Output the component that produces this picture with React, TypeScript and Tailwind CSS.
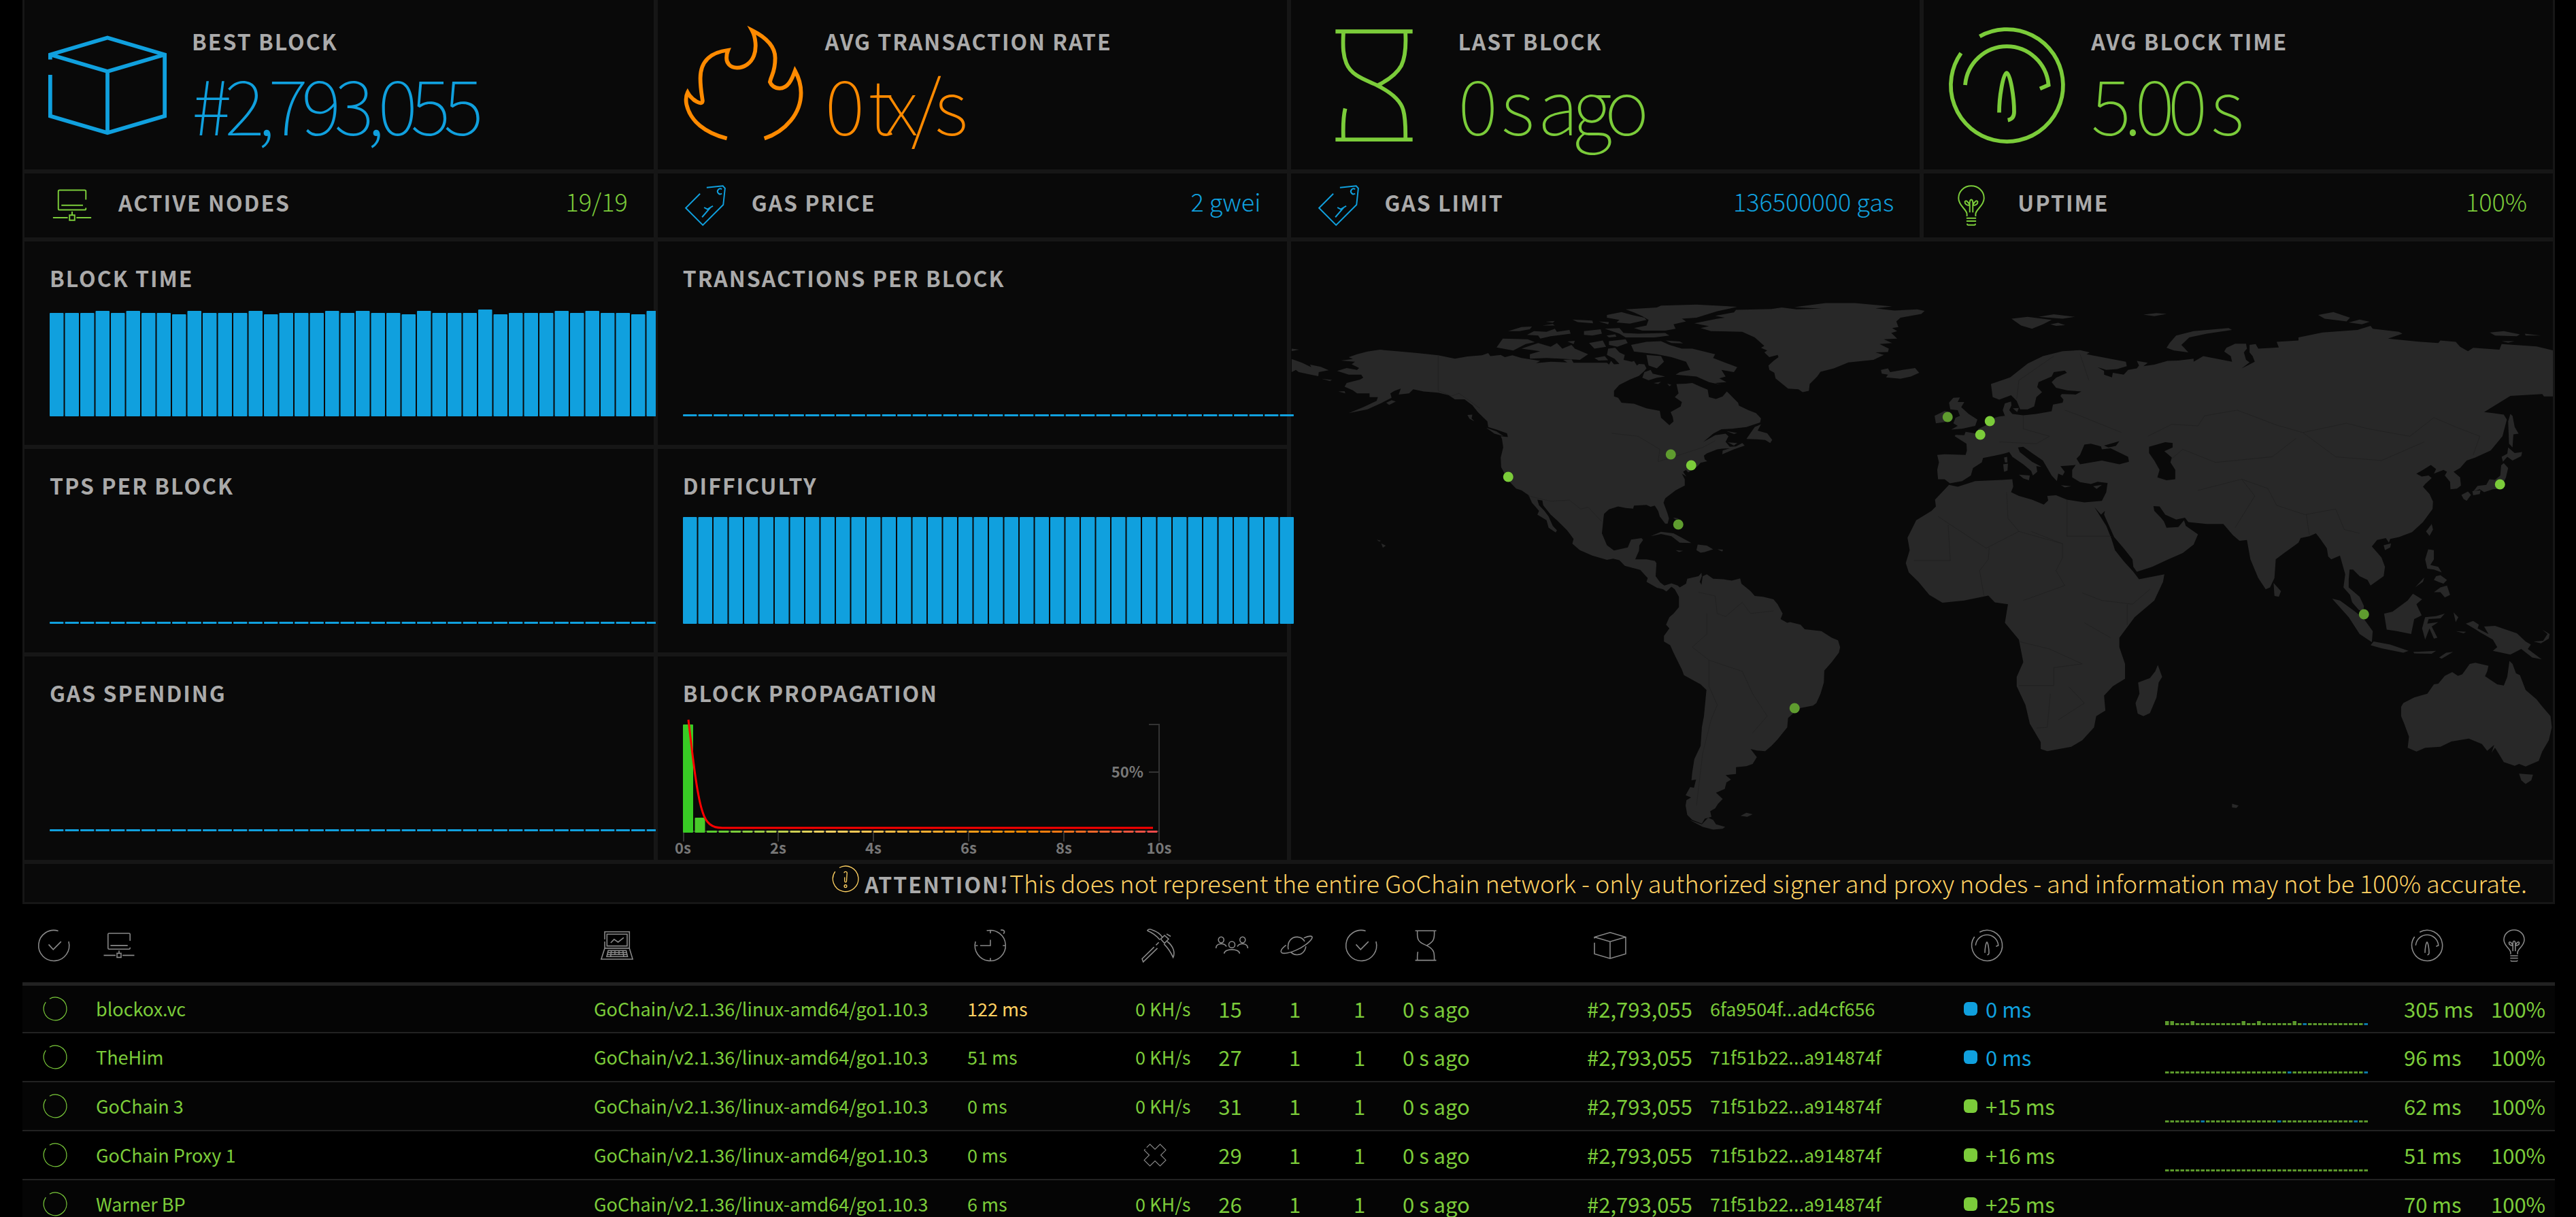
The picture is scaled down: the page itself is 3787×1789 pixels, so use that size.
import type { ReactNode } from "react";
import { clsx } from "clsx";

// ── Icons ────────────────────────────────────────────────

const GAP_RING = "M8.8 2.8A15 15 0 1 1 3.8 7.3";

const icons = {
  block:
    "M.7 9V7.7L16 3.2L31.3 7.7V24.1L16 28.6L.7 24.1V13.1M.7 7.7L16 12.2L31.3 7.7M16 12.2V28.6",
  flame:
    "M22.3 30.1C28 28.2 32.1 23.4 32.1 17.9C32.1 15.5 31.5 13.8 30.5 12C29.6 14.5 28.6 16.7 26.4 16.7C25 16.7 24.1 15.8 23.8 15C24.2 13 25.2 12.5 25.2 8.6C25.2 5.5 23 3.2 19 1.2C20 3 20.3 6 19.5 8C18.7 10 17 11.2 15 11.2C13 11.2 12.2 9.8 12.2 8.6C12.2 7.6 12.3 7.2 12.6 6.5C8.5 7 5.2 9 5.2 14C5.2 16.5 5.5 18 5.8 20C5.8 21.5 3 20 1.8 17.8C1.2 19 1.3 20 1.5 21C2.5 25.5 6.5 28.6 12.3 30.1",
  hourglass:
    "M5.7 1.5H26.3M5.7 30.4H26.3M7.8 2C7.6 6 7.8 8 8.6 10C10 13.5 14 14.5 16.8 15.9C20 17.5 23 19.5 23.8 22.5C24.5 25 24.4 28 24.4 30M24.4 2C24.6 6 24.3 8.5 23.3 10.6C22 13 19.5 14.6 17.2 15.8M8.3 22.1C7.7 24.5 7.7 27 7.8 30",
  gauge: `${GAP_RING}M4.9 15.8A11.2 11.4 0 0 1 27.2 15.8L24.9 16.8M14 23.2C14 19 15 13 16 12.6C17 13 18 19 18 23C18 24.3 17.3 25 16.3 25.2`,
  network:
    "M26.8 11.4V5A1 1 0 0 0 25.8 4H6.2A1 1 0 0 0 5.2 5V18.5A1 1 0 0 0 6.2 19.5H25.8A1 1 0 0 0 26.8 18.5V17.8M7.6 15.9H24.5M16 20.8V23.6M14 23.6H18V27.6H14ZM1 25.6H12.6M19.4 25.6H31",
  tag: "M17 2L29.7 .7L31.4 2.6L30 15.5L14 31.4L.6 18L11.8 6.8M28.9 3.3A2.1 2.1 0 1 0 28.9 6.7M15 17.6L17.6 19L21.9 16.4M13.4 25.2L19.8 17.8",
  bulb: "M12.6 24.5V22.8C12.6 19 6 16.5 6 10.3C6 4.8 10.5 .7 16 .7S26 4.8 26 10.3C26 16.5 19.4 19 19.4 22.8V24.5M12.2 26H19.8M12.2 28.3H19.8M12.8 30.3C12.8 31 13 31.3 13.5 31.3H18.5C19 31.3 19.2 31 19.2 30.3M14.8 21.5V16C12 16 10.8 14.5 11 13C11.5 11.8 13.5 12.5 14.8 16M17.2 21.5V16C20 16 21.2 14.5 21 13C20.5 11.8 18.5 12.5 17.2 16M14.8 16C14.5 13.5 15 11.5 16 11.5S17.5 13.5 17.2 16",
  check: "M20.4 1.6A15 15 0 1 0 30.6 12M11 14.9L15.5 19.9L23.2 12.1",
  laptop:
    "M4 10V2.5H28.2V18.6H4V12M6.2 4.8H26V16.4H6.2ZM9.9 13.3L13.2 9.9L17.1 12.6L22.6 8.2M4 18.6L.6 29.3H31.4L28.2 18.6M7.4 20.8H25L26.4 26.8H6ZM7 22.8H25.6M6.5 24.8H26M10.5 20.8L9.8 26.8M14 20.8V24.8M18 20.8V24.8M21.8 20.8L22.6 26.8",
  clock:
    "M12.4 1.4A15 15 0 1 1 1.4 12M26 .8C29 .4 31 2 28.8 4.4M16 10.3V16H6M1.6 16H3.6M28.2 16H30.2M16 1.4V4M16 28.2V30.6",
  pickaxe:
    "M11.8 17.4L0 29L1.1 32L15 18.6M16.4 12.8L13.6 15.6M5 1.4C6 0 8 -.2 9.8 .6C14 2 18 4.5 19.8 7.8M5 1.4C9 3 13 5 17.4 10.4M22 6L26 9.6L22 13.7L18.2 9.6ZM24 4.6L28 7M21.4 14.4C25 18 28 22 30.4 27.6C33 22 29.5 15.5 24.6 12",
  peers:
    "M5.5 7.5A2.7 2.9 0 1 0 5.5 13.3A2.7 2.9 0 1 0 5.5 7.5M26.5 7.5A2.7 2.9 0 1 0 26.5 13.3A2.7 2.9 0 1 0 26.5 7.5M16 12A3 3.1 0 1 0 16 18.2A3 3.1 0 1 0 16 12M.4 18.6C.4 13.4 9 13 10.6 17M31.6 18.6C31.6 13.4 23 13 21.4 17M8.4 23.8C8.8 18.6 23.2 18.6 23.6 23.8",
  planet:
    "M8 19.8C6.4 12 11.4 7.2 17 7.6C20 7.8 22.6 9.4 24 12M25.2 16.8C24.6 22 20.6 25.4 16 25C13.6 24.8 12 24 10.6 22.6M23.2 8.6C28 6.2 32.4 6 31.2 8.8C29.4 12.6 22 17.8 15.4 20.6C8 23.6 .6 25 .8 21.6C1 20 3 17.6 5.8 15.6",
  cross:
    "M4.4 5.6L9 1L16 8L23 1L31 9L24 16L31 23L23 31L16 24L9 31L1 23L8 16L1.2 9.4L2.4 7.6",
  ring: GAP_RING,
  alert: `${GAP_RING}M14.4 9C14.4 7 17.8 7 17.8 9L17.2 18.6C17 20.4 15.2 20.4 15 18.6V14M16 23A1.5 1.5 0 1 0 16 26A1.5 1.5 0 1 0 16 23`,
};

type IconName = keyof typeof icons;

function Icon({ name, className }: { name: IconName; className?: string }) {
  return (
    <svg
      viewBox="0 0 32 32"
      fill="none"
      stroke="currentColor"
      strokeWidth={1.05}
      className={clsx("shrink-0 overflow-visible", className)}
      aria-hidden="true"
    >
      <path d={icons[name]} />
    </svg>
  );
}

// ── Shared pieces ────────────────────────────────────────

const BLUE = "#10a0de";

function Title({ children, className }: { children: ReactNode; className?: string }) {
  return (
    <h2
      className={clsx(
        "text-[32px] leading-10 font-bold tracking-[2px] text-[#aaa] uppercase whitespace-nowrap",
        className
      )}
    >
      {children}
    </h2>
  );
}

function BigStat({
  icon,
  title,
  value,
  color,
}: {
  icon: IconName;
  title: string;
  value: string;
  color: string;
}) {
  return (
    <section
      className={clsx(
        "flex h-[252px] items-start gap-9 border-x-3 border-b-3 border-[#161616] bg-[#090909] pt-[38px] pl-[34px]",
        color
      )}
    >
      <Icon name={icon} className="size-44" />
      <div className="pt-0.5">
        <Title>{title}</Title>
        <p className="mt-3.5 text-[112px] leading-[112px] font-thin tracking-[-10px] whitespace-nowrap">
          {value}
        </p>
      </div>
    </section>
  );
}

function SmallStat({
  icon,
  title,
  value,
  iconColor,
  color,
}: {
  icon: IconName;
  title: string;
  value: string;
  iconColor: string;
  color: string;
}) {
  return (
    <section className="flex h-[100px] items-start border-3 border-[#161616] bg-[#090909] pt-[17px] pr-[38px] pl-10">
      <Icon name={icon} className={clsx("size-15", iconColor)} />
      <Title className="mt-[5px] ml-[38px]">{title}</Title>
      <p className={clsx("mt-[3px] ml-auto text-[36px] leading-10 font-light", color)}>{value}</p>
    </section>
  );
}

function ChartCard({
  title,
  children,
  className,
}: {
  title: string;
  children: ReactNode;
  className?: string;
}) {
  return (
    <section
      className={clsx(
        "flex h-[305px] flex-col border-3 border-[#161616] bg-[#090909] pt-[33px] pl-[37px]",
        className
      )}
    >
      <Title>{title}</Title>
      {children}
    </section>
  );
}

const flat = Array.from({ length: 40 }, () => 3);
const full = Array.from({ length: 40 }, () => 157);
const blockTimes = [
  152, 152, 152, 155, 152, 155, 152, 152, 150, 155, 152, 152, 152, 155, 150, 152, 152, 152, 155,
  152, 155, 152, 152, 150, 155, 152, 152, 152, 157, 150, 152, 152, 152, 155, 152, 155, 152, 152,
  150, 155,
];

function BarChart({ values }: { values: number[] }) {
  return (
    <svg width={900} height={184} className="max-w-none shrink-0" role="img" aria-label="History">
      {values.map((v, i) => (
        <rect key={i} x={i * 22.5} y={184 - v} width={20.5} height={v} rx={1} fill={BLUE} />
      ))}
    </svg>
  );
}

// Delay colours run from green through yellow and orange to red
const stops: [number, number[]][] = [
  [0, [56, 203, 36]],
  [4, [123, 204, 58]],
  [12, [255, 209, 98]],
  [28, [255, 138, 0]],
  [39, [247, 75, 75]],
];

function delayColor(i: number) {
  const n = stops.findIndex(([at]) => at >= i);
  if (n <= 0) return `rgb(${stops[0][1].join(",")})`;
  const [a, from] = stops[n - 1];
  const [b, to] = stops[n];
  const t = (i - a) / (b - a);
  return `rgb(${from.map((c, k) => Math.round(c + (to[k] - c) * t)).join(",")})`;
}

function PropagationChart() {
  return (
    <svg
      width={740}
      height={206}
      className="max-w-none shrink-0 overflow-visible text-[22px] font-bold"
      role="img"
      aria-label="Block propagation"
    >
      <g stroke="#333" strokeWidth={2} fill="none">
        <path d="M685 27H700V184H685M685 97H700" />
        <path d="M1 184H700" />
        <path d="M1 184V199M140 184V199M280 184V199M420 184V199M560 184V199M700 184V199" />
      </g>
      {Array.from({ length: 40 }, (_, i) => {
        const h = i === 0 ? 159 : i === 1 ? 22 : 3;
        return (
          <rect
            key={i}
            x={i * 17.5}
            y={186 - h}
            width={15}
            height={h}
            rx={1}
            fill={delayColor(i)}
          />
        );
      })}
      <path
        d="M8 20C14 70 20 130 29 156C34 172 42 179 58 179H691"
        fill="none"
        stroke="red"
        strokeWidth={3}
      />
      <g fill="#777" textAnchor="middle">
        {["0s", "2s", "4s", "6s", "8s", "10s"].map((label, i) => (
          <text key={label} x={i * 140} y={217}>
            {label}
          </text>
        ))}
        <text x={677} y={105} textAnchor="end">
          50%
        </text>
      </g>
    </svg>
  );
}

// ── World map ────────────────────────────────────────────

const americas = [
  // mainland
  "146,237 175,233 165,228 185,220 210,213 240,208 280,212 330,217 380,223 420,232 450,226 485,223 500,217 505,225 530,222 540,228 558,223 580,230 625,238 615,244 650,240 690,242 680,235 700,234 705,243 740,243 785,243 790,248 795,238 802,247 815,246 803,232 785,222 788,205 805,203 815,215 828,222 825,235 845,240 850,238 857,250 862,246 875,247 880,258 875,265 862,278 840,288 815,302 802,318 802,333 812,337 820,350 850,353 880,365 912,372 915,390 935,410 945,400 943,388 938,375 962,360 965,348 948,335 957,325 952,300 975,299 990,297 1010,307 1027,315 1030,335 1047,340 1063,333 1073,320 1100,350 1102,358 1125,370 1143,378 1155,392 1153,403 1120,415 1085,420 1060,421 1040,433 1017,455 1045,437 1070,433 1077,440 1070,455 1080,468 1095,467 1110,458 1116,465 1090,475 1062,488 1063,478 1080,472 1062,473 1050,475 1025,486 1018,492 1020,502 1026,507 1010,511 1003,520 980,537 975,530 968,535 976,548 965,540 972,555 972,572 950,585 925,606 921,618 930,645 934,660 931,674 925,674 912,655 908,640 900,626 890,629 880,624 850,626 848,634 830,632 812,628 790,636 778,648 776,668 773,700 785,732 802,746 835,738 843,717 868,713 872,718 863,732 862,747 853,770 880,770 900,774 904,780 902,815 913,832 923,840 940,834 955,840 960,845 975,835 978,822 1005,815 1012,806 1013,815 1008,830 1012,838 1015,815 1025,810 1040,822 1065,823 1085,827 1105,821 1108,835 1130,855 1140,868 1160,870 1185,877 1195,890 1207,915 1202,930 1218,940 1225,938 1250,945 1260,957 1300,962 1325,980 1340,987 1345,1005 1342,1020 1325,1045 1307,1068 1306,1100 1298,1130 1288,1155 1280,1162 1250,1168 1235,1180 1220,1195 1218,1220 1195,1252 1180,1270 1165,1284 1145,1282 1130,1278 1145,1300 1135,1318 1120,1324 1095,1327 1095,1345 1070,1348 1083,1360 1072,1368 1068,1385 1047,1395 1063,1412 1052,1425 1045,1437 1033,1445 1036,1460 1020,1465 1013,1478 990,1468 978,1455 974,1430 976,1415 987,1408 974,1402 985,1380 994,1382 999,1360 988,1362 990,1340 995,1305 1010,1270 1013,1220 1018,1190 1024,1120 1010,1105 970,1080 965,1065 945,1020 937,1000 922,990 922,975 935,955 927,945 935,925 945,915 958,898 958,870 948,850 940,843 928,856 920,850 905,846 880,830 883,820 865,798 828,787 815,772 800,768 785,771 750,760 720,745 702,728 705,715 690,693 665,665 650,650 632,625 630,612 618,610 622,625 635,640 645,655 655,680 665,692 662,698 645,685 640,665 618,650 622,640 605,618 597,598 580,585 567,580 548,558 537,535 531,523 530,497 536,470 533,447 530,440 548,442 549,450 545,432 520,422 500,415 498,400 475,375 462,357 443,341 420,341 405,330 380,323 345,320 320,314 310,325 285,328 290,312 275,318 265,325 268,337 245,350 210,368 165,378 200,362 232,345 235,335 215,335 215,325 185,325 175,317 155,307 160,297 192,288 200,283 195,275 165,275 137,265 160,257 185,262 190,257 172,247 180,240",
  // Chukotka, wrapped over the date line
  "28,233 53,243 75,255 72,248 98,254 117,263 93,268 92,279 70,274 45,268 38,262 28,268",
  "28,205 46,208 28,212",
  "100,286 125,289 120,292",
  "140,320 155,319 157,325",
  "255,350 268,343 278,347 262,356",
  // Greenland and Iceland
  "995,137 1050,125 1068,122 1045,117 1090,108 1095,101 1180,99 1205,95 1240,100 1300,98 1235,94 1310,83 1380,83 1470,92 1430,97 1475,103 1530,100 1548,104 1540,112 1490,122 1480,132 1485,147 1470,150 1482,158 1468,163 1482,178 1450,180 1470,190 1440,193 1462,205 1460,214 1430,215 1450,222 1425,235 1365,242 1330,258 1298,267 1290,280 1272,300 1270,318 1255,322 1245,314 1220,312 1190,285 1187,270 1175,262 1173,250 1185,238 1197,228 1195,222 1175,228 1163,215 1170,210 1155,203 1163,198 1140,175 1110,160 1035,158 1010,150 1030,145",
  "1443,262 1460,258 1465,268 1495,262 1525,257 1535,270 1515,280 1490,286 1455,282 1460,275 1445,272",
  // Arctic archipelago
  "830,100 905,95 915,90 1000,87 1098,93 1050,105 1000,122 965,125 975,132 945,140 950,152 925,157 870,157 850,150 880,143 885,128 870,118 850,108",
  "785,115 820,107 845,115 875,122 880,128 840,138 808,135 815,128 785,122",
  "780,152 815,150 825,163 860,165 925,163 935,170 900,175 830,175 815,165",
  "548,158 580,147 605,146 600,153 575,158",
  "593,168 610,158 640,160 660,152 665,160 695,155 698,165 650,172 625,178 620,170",
  "520,202 535,178 595,180 612,188 590,193 560,210",
  "580,205 620,190 650,200 665,190 678,205 700,195 708,205 740,220 720,235 640,230 600,232 600,220 625,212",
  "730,158 770,153 773,165 750,170 730,168",
  "742,190 775,183 783,200 755,205",
  "790,185 830,180 835,190 810,200 790,195",
  "702,127 750,130 752,137 715,134",
  "765,132 790,134 788,140",
  "630,143 655,139 660,143",
  "638,133 660,131 655,136",
  "784,170 805,167 808,173 790,175",
  "690,186 708,184 705,193",
  "755,230 780,225 788,236 765,237",
  "843,195 880,187 915,185 935,195 965,205 990,205 1045,220 1040,230 1075,245 1098,255 1090,268 1060,262 1070,280 1055,285 1072,295 1045,297 1060,302 1030,295 1000,280 950,275 960,268 985,262 975,240 940,228 905,220 850,213",
  "926,183 960,186 968,191 940,190",
  "880,222 915,225 922,240 905,258 885,250",
  "875,268 890,262 895,272 925,280 905,283 885,290 870,283",
  "897,297 915,294 908,300",
  "930,299 940,302 935,306",
  // Atlantic and Pacific islands
  "1120,447 1140,415 1155,408 1147,425 1170,432 1182,450 1177,458 1165,450 1145,448",
  "1072,426 1098,431 1090,434",
  "1075,456 1098,458 1090,465",
  "495,417 520,427 537,440 515,433",
  "450,383 462,382 460,392 467,400 455,393",
  "890,708 915,696 945,700 965,712 988,726 960,725 940,708 915,702",
  "985,743 1000,745 1003,730 1025,733 1040,743 1020,750 1010,752 1000,745",
  "1050,743 1064,744 1062,749",
  "950,745 968,747 958,750",
  "944,658 958,660 950,663",
  "243,727 254,733 247,739",
  "232,717 243,720 238,722",
  "983,1468 1013,1480 1028,1462 1040,1468 1047,1480 1069,1487 1063,1492 1040,1494 1015,1487",
  "1106,1457 1120,1449 1135,1453 1122,1460",
];

const oldWorld = [
  // Europe, Asia and Africa
  "103,490 120,488 168,490 171,478 170,460 143,440 145,436 165,437 168,428 190,432 198,420 215,410 235,390 245,387 258,385 253,370 258,352 272,347 273,357 268,370 275,380 300,384 330,380 365,373 368,355 390,350 392,342 385,332 388,327 420,328 433,320 400,317 375,310 365,295 375,283 400,270 395,264 370,268 365,280 335,295 332,308 343,322 330,335 325,360 310,368 293,368 285,345 272,330 245,342 230,335 226,300 270,282 310,245 345,225 390,212 430,209 452,215 445,220 490,230 535,240 537,252 515,260 490,262 470,255 485,265 485,275 503,282 505,270 530,275 540,262 560,258 565,250 560,238 585,243 575,252 600,248 630,238 655,237 690,232 690,240 712,225 778,240 775,225 760,213 765,203 785,192 810,192 812,205 805,215 810,235 818,242 800,258 830,240 825,225 818,215 818,195 832,193 838,205 885,202 880,187 930,183 930,175 985,162 1065,155 1095,144 1100,152 1160,160 1168,165 1135,178 1210,187 1250,190 1255,183 1290,187 1300,200 1318,212 1330,203 1390,208 1395,193 1475,199 1520,212 1520,333 1492,333 1488,327 1415,332 1355,375 1375,378 1400,382 1407,395 1397,440 1370,478 1335,497 1315,505 1300,525 1285,535 1300,550 1302,572 1293,580 1278,582 1277,562 1265,545 1270,535 1262,530 1240,540 1245,528 1233,517 1215,530 1200,540 1212,548 1228,545 1235,552 1220,568 1215,575 1230,595 1238,615 1237,635 1215,670 1190,697 1160,710 1140,715 1137,725 1130,713 1110,718 1098,735 1120,765 1128,790 1125,815 1095,840 1088,825 1070,815 1055,797 1047,797 1045,825 1045,845 1070,870 1080,895 1078,910 1068,905 1053,885 1048,865 1033,845 1037,810 1025,760 1005,770 998,762 995,740 980,715 970,700 955,708 935,713 930,725 895,755 878,770 875,820 865,845 855,850 838,820 820,770 812,718 795,720 780,705 758,675 720,675 678,670 670,658 650,663 625,650 612,628 598,627 600,640 615,658 622,668 628,685 655,683 668,665 672,680 700,703 690,730 665,753 632,770 595,790 560,803 552,790 550,770 530,740 508,710 485,650 487,640 478,650 463,630 490,680 502,715 510,745 530,775 552,803 565,823 623,810 620,830 600,880 555,925 520,980 520,1005 533,1050 533,1090 505,1110 485,1135 488,1175 467,1190 462,1220 435,1255 410,1272 355,1284 340,1278 340,1260 315,1210 305,1160 285,1110 285,1085 300,1045 290,985 258,940 265,890 235,885 220,867 165,880 115,886 85,865 60,830 38,805 31,780 40,745 35,712 55,665 90,640 100,628 98,610 130,570 150,575 190,560 250,557 275,555 277,575 272,590 290,600 320,610 347,623 357,612 355,600 375,598 400,610 440,617 480,613 490,590 493,565 470,562 455,568 430,563 412,550 412,530 420,517 385,520 395,535 390,545 380,540 377,560 365,545 350,515 345,505 320,485 300,468 288,470 292,482 320,508 342,522 330,520 332,535 322,545 318,533 300,515 275,495 268,482 255,487 235,492 208,498 205,510 185,525 180,545 160,560 132,566 120,555 105,555 103,530 107,510",
  // British Isles
  "130,350 140,337 155,336 150,348 165,348 158,362 175,380 195,395 190,412 160,420 135,422 150,412 140,405 145,390 155,385 150,370 133,368",
  "100,405 97,385 120,372 133,375 130,400",
  // Arctic
  "273,125 310,120 365,128 345,140 320,152 295,143",
  "335,120 370,113 418,120 390,125",
  "362,140 380,136 396,142 375,144",
  "575,114 605,110 628,112 600,118",
  "628,203 635,190 650,170 690,158 770,150 778,155 720,165 680,175 662,195 678,215 645,210",
  "975,115 1010,107 1048,122 1040,132 990,125",
  "1045,135 1070,127 1093,133 1075,140",
  "1368,162 1400,158 1437,167 1430,172 1380,170",
  "1448,165 1485,170 1450,170",
  "1395,185 1425,185 1410,189",
  // Mediterranean
  "256,497 263,495 264,510 258,510",
  "254,515 265,513 264,532 256,535",
  "290,543 315,545 313,558 300,553",
  "386,571 410,574 395,577",
  "460,574 480,570 468,581",
  "276,365 290,364 286,375",
  // Indian Ocean
  "873,833 890,855 885,870 875,868",
  "608,1053 618,1085 610,1100 605,1140 590,1182 575,1190 562,1183 557,1155 566,1130 563,1100 590,1088 602,1070",
  "778,1425 793,1430 788,1436 778,1435",
  // Japan and Sakhalin
  "1415,380 1420,385 1425,415 1434,433 1422,435 1420,470 1412,460 1410,400",
  "1410,470 1425,485 1442,482 1440,493 1420,505 1408,495 1398,508 1395,495 1408,487",
  "1400,512 1410,525 1405,550 1393,580 1375,582 1355,590 1345,582 1330,588 1340,573 1360,570 1367,555 1380,557 1392,545 1394,518",
  "1303,597 1318,588 1325,597 1315,613 1308,608",
  "1328,587 1347,585 1345,595 1330,598",
  // South-east Asia
  "1235,675 1238,690 1230,707 1222,695",
  "1125,732 1142,727 1140,738 1128,745",
  "1227,743 1240,745 1240,770 1232,785 1250,790 1258,805 1240,797 1225,795 1220,770",
  "1245,815 1255,812 1270,825 1262,835 1250,830 1240,825",
  "1240,858 1255,845 1270,840 1277,865 1265,872 1255,858",
  "1218,818 1215,830 1197,845",
  "1007,875 1025,880 1060,910 1080,930 1100,962 1098,992 1070,970 1045,925",
  "1095,1000 1102,990 1140,998 1182,1015 1170,1020 1120,1008",
  "1193,1018 1245,1015 1235,1023 1195,1022",
  "1252,1033 1268,1020 1284,1018 1258,1036",
  "1126,915 1145,910 1180,880 1192,862 1213,877 1200,890 1212,920 1195,930 1188,970 1155,962 1132,958",
  "1220,925 1245,922 1265,915 1255,928 1228,930 1225,942 1250,938 1235,950 1248,980 1240,982 1230,955 1220,985 1213,955",
  "1285,912 1296,925 1290,938",
  "1290,962 1314,964 1308,968",
  "1313,942 1330,935 1343,945 1340,955 1365,970 1355,950 1380,948 1430,968 1450,990 1462,998 1455,1010 1487,1038 1465,1033 1440,1010 1415,1025 1375,1015 1385,1005 1375,985 1345,965 1335,957",
  "1468,990 1490,988 1500,970 1488,958 1505,970 1503,982 1485,995",
  // Australia and Tasmania
  "1170,1155 1195,1140 1225,1130 1240,1105 1250,1103 1265,1082 1282,1072 1295,1082 1305,1078 1322,1050 1335,1047 1365,1055 1362,1070 1357,1083 1385,1105 1400,1108 1408,1085 1413,1042 1420,1050 1428,1075 1437,1080 1450,1120 1475,1145 1485,1160 1507,1190 1510,1220 1503,1255 1488,1285 1480,1310 1450,1325 1435,1318 1425,1323 1400,1313 1388,1290 1380,1275 1372,1288 1378,1267 1362,1283 1350,1265 1320,1250 1280,1258 1255,1272 1220,1275 1200,1285 1180,1275 1183,1245 1172,1210 1165,1190 1165,1165",
  "1435,1344 1467,1347 1463,1362 1450,1372 1440,1362",
];

const seas = [
  "430,490 440,462 455,460 478,467 480,475 500,472 540,495 542,508 520,515 480,505 455,510 430,515 422,500",
  "485,465 520,453 512,466 495,470",
  "588,468 625,456 642,458 642,470 623,480 640,497 637,510 648,530 648,555 628,558 607,550 612,530 600,505 588,485",
];

const borders = [
  "M380 223V318L412 332L430 325L480 365",
  "M797 432L860 440L912 475L908 508L965 488L1015 470L1045 452",
  "M597 600L650 614L695 611L722 635L740 630L772 668",
  "M1005 858L1045 868L1050 915L1070 923L1110 885L1130 915L1185 908M1025 915V970L990 1005L1030 1040L1110 1070L1135 1130L1170 1190L1135 1235M1030 1040L1030 1110L1050 1160L1035 1200L1015 1290L1000 1430",
];

const oldBorders = [
  "M105 655L215 740L290 695L265 660L262 590M400 610V708H502M290 695L390 728V765L375 800M128 677L133 773H50M390 728L318 695M222 738L220 770L200 800L210 867M375 800L395 840L300 880M435 860L480 880L550 890L590 850M538 890V945M440 940L500 980M290 990L360 1010L435 1050L370 1060V1108H290M362 1130L355 1220L330 1222M405 1112L440 1155L380 1200",
  "M585 440L640 408L700 412L715 385L790 370L880 410L940 430L1040 405L1090 420L1185 440L1240 390L1290 415L1345 440L1330 490M940 430L1015 495L1120 505L1218 455M640 500L665 475L740 510L870 495L925 445M700 585L800 555L860 580L880 625L945 650L1015 635L1035 690L1070 700M785 685L830 600L800 555M948 650L955 705M395 370L430 385L525 430M245 455L330 460L360 440L300 420L300 385M430 220L450 290M285 340L290 290L370 225",
];

const nodePins = [
  { x: 319, y: 346 },
  { x: 558, y: 313, stale: true },
  { x: 588, y: 329 },
  { x: 569, y: 416, stale: true },
  { x: 740, y: 686, stale: true },
  { x: 965, y: 258, stale: true },
  { x: 1027, y: 264 },
  { x: 1013, y: 284 },
  { x: 1577, y: 548, stale: true },
  { x: 1777, y: 357 },
];

function WorldMap() {
  return (
    <svg viewBox="0 0 1855 909" className="h-full w-full" role="img" aria-label="Node locations">
      <g fill="#282828" transform="translate(-16.5 45) scale(.6122 .5485)">
        {americas.map((points) => (
          <polygon key={points} points={points} />
        ))}
        <path d={borders.join("")} fill="none" stroke="#1f1f1f" strokeWidth={1.2} />
      </g>
      <g fill="#282828" transform="translate(883.5 45) scale(.6422 .5485)">
        {oldWorld.map((points) => (
          <polygon key={points} points={points} />
        ))}
        <path d={oldBorders.join("")} fill="none" stroke="#1f1f1f" strokeWidth={1.2} />
        {seas.map((points) => (
          <polygon key={points} points={points} fill="#090909" />
        ))}
      </g>
      {nodePins.map(({ x, y, stale }) => (
        <circle key={x} cx={x} cy={y} r={7.5} fill={stale ? "#5f9c2f" : "#7bcc3a"} />
      ))}
    </svg>
  );
}

// ── Node table ───────────────────────────────────────────

type Node = {
  name: string;
  latency: string;
  slow?: boolean;
  mining: boolean;
  peers: number;
  hash: string;
  propagation: string;
  first?: boolean;
  highs: number[];
  zeros: number[];
  average: string;
};

const nodes: Node[] = [
  {
    name: "blockox.vc",
    latency: "122 ms",
    slow: true,
    mining: true,
    peers: 15,
    hash: "6fa9504f...ad4cf656",
    propagation: "0 ms",
    first: true,
    highs: [0, 1, 5, 15, 18, 25],
    zeros: [27, 39],
    average: "305 ms",
  },
  {
    name: "TheHim",
    latency: "51 ms",
    mining: true,
    peers: 27,
    hash: "71f51b22...a914874f",
    propagation: "0 ms",
    first: true,
    highs: [],
    zeros: [24, 39],
    average: "96 ms",
  },
  {
    name: "GoChain 3",
    latency: "0 ms",
    mining: true,
    peers: 31,
    hash: "71f51b22...a914874f",
    propagation: "+15 ms",
    highs: [],
    zeros: [7, 22, 37],
    average: "62 ms",
  },
  {
    name: "GoChain Proxy 1",
    latency: "0 ms",
    mining: false,
    peers: 29,
    hash: "71f51b22...a914874f",
    propagation: "+16 ms",
    highs: [],
    zeros: [],
    average: "51 ms",
  },
  {
    name: "Warner BP",
    latency: "6 ms",
    mining: true,
    peers: 26,
    hash: "71f51b22...a914874f",
    propagation: "+25 ms",
    highs: [],
    zeros: [],
    average: "70 ms",
  },
];

function Sparkline({ highs, zeros }: { highs: number[]; zeros: number[] }) {
  return (
    <svg width={300} height={48} className="block" role="img" aria-label="Propagation history">
      {Array.from({ length: 40 }, (_, i) => {
        const h = highs.includes(i) ? 6 : 3;
        return (
          <rect
            key={i}
            x={i * 7.5}
            y={48 - h}
            width={5.5}
            height={h}
            fill={zeros.includes(i) ? "#0c78a7" : "#5c992c"}
          />
        );
      })}
    </svg>
  );
}

const columns: { icon?: IconName; label: string; width: string }[] = [
  { icon: "check", label: "Status", width: "w-24" },
  { icon: "network", label: "Name", width: "w-auto" },
  { icon: "laptop", label: "Type", width: "w-[549px]" },
  { icon: "clock", label: "Latency", width: "w-[247px]" },
  { icon: "pickaxe", label: "Mining", width: "w-[108px]" },
  { icon: "peers", label: "Peers", width: "w-[95px]" },
  { icon: "planet", label: "Pending transactions", width: "w-[95px]" },
  { icon: "check", label: "Uncles", width: "w-[95px]" },
  { icon: "hourglass", label: "Last block time", width: "w-[271px]" },
  { icon: "block", label: "Last block", width: "w-[181px]" },
  { label: "Hash", width: "w-[373px]" },
  { icon: "gauge", label: "Propagation", width: "w-[296px]" },
  { label: "Propagation history", width: "w-[351px]" },
  { icon: "gauge", label: "Average propagation", width: "w-32" },
  { icon: "bulb", label: "Uptime", width: "w-[106px]" },
];

function NodeTable() {
  return (
    <table className="w-full table-fixed border-collapse text-[31px] leading-10 whitespace-nowrap text-[#7bcc3a]">
      <thead>
        <tr className="h-[117px] border-b-5 border-[#222] text-[#888]">
          {columns.map(({ icon, label, width }) => (
            <th
              key={label}
              scope="col"
              aria-label={label}
              className={clsx("pt-2 pl-[22px] text-left", width)}
            >
              {icon && <Icon name={icon} className="size-12" />}
            </th>
          ))}
        </tr>
      </thead>
      <tbody>
        {nodes.map((node) => (
          <tr key={node.name} className="h-18 border-b-2 border-[#222] odd:bg-[#050505]">
            <td>
              <Icon name="ring" className="mx-auto size-9" />
            </td>
            <td className="pl-3 text-[27px]">{node.name}</td>
            <td className="pl-3 text-[27px]">GoChain/v2.1.36/linux-amd64/go1.10.3</td>
            <td className={clsx("pl-3 text-[27px]", node.slow && "text-[#ffd162]")}>
              {node.latency}
            </td>
            <td className="pl-3 text-[27px]">
              {node.mining ? (
                "0 KH/s"
              ) : (
                <Icon name="cross" className="ml-3 size-[34px] text-[#888]" />
              )}
            </td>
            <td className="pr-2 text-center">{node.peers}</td>
            <td className="pr-2 text-center">1</td>
            <td className="pr-2 text-center">1</td>
            <td className="pl-3">0 s ago</td>
            <td className="pl-3">#2,793,055</td>
            <td className="pl-3 text-[27px]">{node.hash}</td>
            <td className={clsx("pl-3", node.first && "text-[#10a0de]")}>
              <span className="flex items-center gap-3">
                <span className="size-5 rounded-md bg-current" />
                {node.propagation}
              </span>
            </td>
            <td className="pl-3">
              <Sparkline highs={node.highs} zeros={node.zeros} />
            </td>
            <td className="pl-3">{node.average}</td>
            <td className="pl-3">100%</td>
          </tr>
        ))}
      </tbody>
    </table>
  );
}

// ── Page ─────────────────────────────────────────────────

export default function App() {
  return (
    <main className="h-screen overflow-hidden bg-black pr-[31px] pl-[33px] font-['Noto_Sans_CJK_SC','Noto_Sans',sans-serif]">
      <div className="grid grid-cols-4">
        <BigStat icon="block" title="Best Block" value="#2,793,055" color="text-[#10a0de]" />
        <BigStat icon="flame" title="Avg Transaction Rate" value="0 tx/s" color="text-[#ff8a00]" />
        <BigStat icon="hourglass" title="Last Block" value="0 s ago" color="text-[#7bcc3a]" />
        <BigStat icon="gauge" title="Avg Block Time" value="5.00 s" color="text-[#7bcc3a]" />

        <SmallStat
          icon="network"
          title="Active Nodes"
          value="19/19"
          iconColor="text-[#7bcc3a]"
          color="text-[#7bcc3a]"
        />
        <SmallStat
          icon="tag"
          title="Gas Price"
          value="2 gwei"
          iconColor="text-[#10a0de]"
          color="text-[#10a0de]"
        />
        <SmallStat
          icon="tag"
          title="Gas Limit"
          value="136500000 gas"
          iconColor="text-[#10a0de]"
          color="text-[#10a0de]"
        />
        <SmallStat
          icon="bulb"
          title="Uptime"
          value="100%"
          iconColor="text-[#7bcc3a]"
          color="text-[#7bcc3a]"
        />

        <div className="overflow-hidden">
          <ChartCard title="Block Time">
            <BarChart values={blockTimes} />
          </ChartCard>
          <ChartCard title="TPS per Block">
            <BarChart values={flat} />
          </ChartCard>
          <ChartCard title="Gas Spending">
            <BarChart values={flat} />
          </ChartCard>
        </div>

        {/* z-10 keeps the long bar rows above the map panel's edge */}
        <div className="z-10">
          <ChartCard title="Transactions per Block">
            <BarChart values={flat} />
          </ChartCard>
          <ChartCard title="Difficulty">
            <BarChart values={full} />
          </ChartCard>
          <ChartCard title="Block Propagation">
            <PropagationChart />
          </ChartCard>
        </div>

        <section className="col-span-2 h-[915px] border-3 border-[#161616] bg-[#090909]">
          <WorldMap />
        </section>
      </div>

      <section className="flex h-[62px] items-start justify-end border-3 border-[#161616] bg-[#090909] pr-[38px] text-[#ffd162]">
        <Icon name="alert" className="mt-[2px] mr-2 size-10" />
        <Title className="mt-[9px]">Attention!</Title>
        <p className="mt-[7px] text-[36px] leading-10 font-light whitespace-nowrap">
          This does not represent the entire GoChain network - only authorized signer and proxy
          nodes - and information may not be 100% accurate.
        </p>
      </section>

      <NodeTable />
    </main>
  );
}
